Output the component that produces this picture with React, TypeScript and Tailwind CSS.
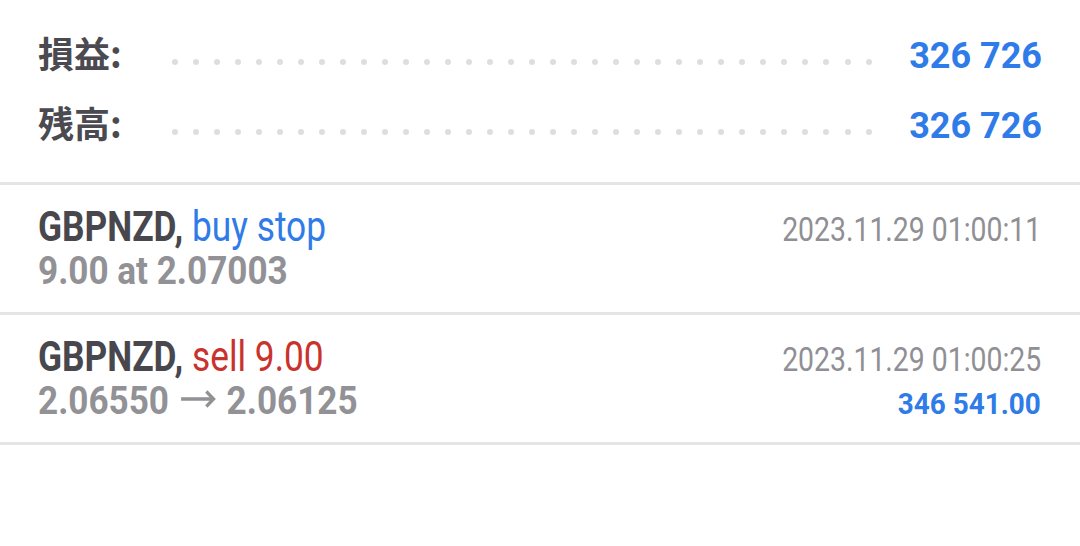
const SummaryRow = ({ label, value }: { label: string; value: string }) => (
  <div className="flex h-[70px] items-baseline leading-[70px]">
    <span className="w-[134px] font-['Noto_Sans_CJK_JP',sans-serif] text-[36px] font-bold text-[#4a4a50]">
      {label}
    </span>
    <span className="mt-[20px] flex w-[700px] items-center justify-between self-center">
      {Array.from({ length: 34 }).map((_, i) => (
        <span key={i} className="h-[6px] w-[6px] rounded-full bg-[#dedee0]" />
      ))}
    </span>
    <span className="flex-1 text-right font-['Roboto',sans-serif] text-[36px] font-bold text-[#2f7be8]">
      {value}
    </span>
  </div>
);

const Arrow = () => (
  <svg
    viewBox="0 0 40 18"
    className="mx-[12px] inline-block h-[18px] w-[40px] align-[6px]"
    fill="none"
    stroke="currentColor"
    strokeWidth="3.6"
  >
    <path d="M1 9h36" />
    <path d="M29 1.5l8 7.5-8 7.5" strokeLinejoin="miter" />
  </svg>
);

type Trade = {
  symbol: string;
  action: string;
  actionColor: string;
  detail: React.ReactNode;
  time: string;
  profit?: string;
};

const trades: Trade[] = [
  {
    symbol: "GBPNZD,",
    action: "buy stop",
    actionColor: "text-[#2f7be8]",
    detail: "9.00 at 2.07003",
    time: "2023.11.29 01:00:11",
  },
  {
    symbol: "GBPNZD,",
    action: "sell 9.00",
    actionColor: "text-[#c9322d]",
    detail: (
      <>
        2.06550
        <Arrow />
        2.06125
      </>
    ),
    time: "2023.11.29 01:00:25",
    profit: "346 541.00",
  },
];

const TradeRow = ({ trade }: { trade: Trade }) => (
  <div className="border-b-[3px] border-[#e5e5e7] pb-[19px] pl-[38px] pr-[39px] pt-[20px] font-['Roboto',sans-serif]">
    <div className="flex h-[44px] items-baseline justify-between leading-[44px]">
      <span className="inline-block origin-left scale-x-[0.84] whitespace-nowrap text-[42px]">
        <span className="font-bold text-[#47474d]">{trade.symbol}</span>{" "}
        <span className={trade.actionColor}>{trade.action}</span>
      </span>
      <span className="inline-block origin-right scale-x-[0.86] whitespace-nowrap text-[33px] text-[#8f8f94]">
        {trade.time}
      </span>
    </div>
    <div className="flex h-[44px] items-baseline justify-between leading-[44px]">
      <span className="inline-block origin-left scale-x-[0.9] whitespace-nowrap text-[39px] font-bold text-[#919196]">
        {trade.detail}
      </span>
      {trade.profit && (
        <span className="inline-block origin-right scale-x-[0.93] whitespace-nowrap text-[30px] font-bold text-[#2f7be8]">
          {trade.profit}
        </span>
      )}
    </div>
  </div>
);

export default function App() {
  return (
    <div className="h-[546px] w-[1080px] overflow-hidden bg-white">
      <div className="border-b-[3px] border-[#e5e5e7] pb-[25px] pl-[38px] pr-[38px] pt-[17px]">
        <SummaryRow label="損益:" value="326 726" />
        <SummaryRow label="残高:" value="326 726" />
      </div>
      {trades.map((t, i) => (
        <TradeRow key={i} trade={t} />
      ))}
    </div>
  );
}
